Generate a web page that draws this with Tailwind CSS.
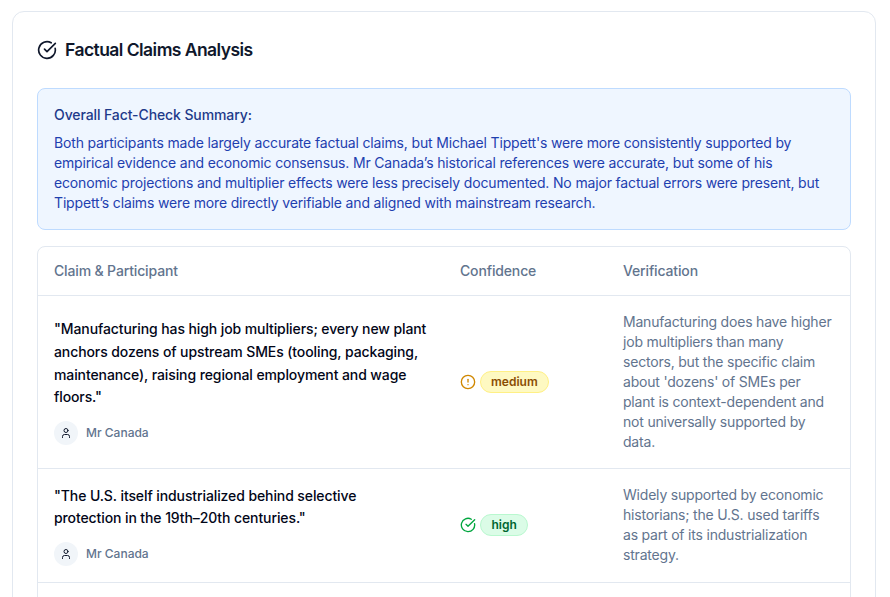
<!DOCTYPE html>
<html lang="en">

<head>
  <meta charset="UTF-8">
  <meta name="viewport" content="width=device-width, initial-scale=1.0">
  <title>Factual Claims Analysis</title>
  <script src="https://cdn.jsdelivr.net/npm/@tailwindcss/browser@4"></script>
</head>

<body class="bg-white h-[597px] overflow-hidden font-['Inter',sans-serif] antialiased">
  <div class="pt-[11px] pl-3 pr-[14px]">
    <div class="bg-white border border-slate-200 rounded-xl p-6">
      <!-- Title -->
      <div class="flex items-center gap-2 mb-6">
        <svg class="w-5 h-5 text-slate-900" viewBox="0 0 24 24" fill="none" stroke="currentColor" stroke-width="2" stroke-linecap="round" stroke-linejoin="round"><path d="M21.801 10A10 10 0 1 1 17 3.335"/><path d="m9 11 3 3L22 4"/></svg>
        <h2 class="text-[17.5px] leading-7 font-semibold tracking-[-0.55px] text-slate-900">Factual Claims Analysis</h2>
      </div>

      <!-- Summary -->
      <div class="bg-blue-50 border border-blue-200 rounded-lg p-4 mb-4">
        <h3 class="text-sm font-medium tracking-[-0.1px] text-[#1e3a8a] mb-2">Overall Fact-Check Summary:</h3>
        <p class="text-sm tracking-[-0.16px] text-[#1e40af]">Both participants made largely accurate factual claims, but Michael Tippett's were more consistently supported by empirical evidence and economic consensus. Mr Canada’s historical references were accurate, but some of his economic projections and multiplier effects were less precisely documented. No major factual errors were present, but Tippett’s claims were more directly verifiable and aligned with mainstream research.</p>
      </div>

      <!-- Claims table -->
      <div class="border border-slate-200 rounded-lg overflow-hidden">
        <table class="w-full table-fixed">
          <thead>
            <tr class="border-b border-slate-200">
              <th class="w-[406px] h-12 px-4 text-left text-sm font-medium tracking-[-0.15px] text-slate-500">Claim &amp; Participant</th>
              <th class="w-[163px] h-12 px-4 text-left text-sm font-medium tracking-[-0.15px] text-slate-500">Confidence</th>
              <th class="h-12 px-4 text-left text-sm font-medium tracking-[-0.15px] text-slate-500">Verification</th>
            </tr>
          </thead>
          <tbody>
            <tr class="border-b border-slate-200">
              <td class="p-4 align-middle">
                <p class="max-w-[372.5px] text-sm leading-relaxed font-[450] tracking-[-0.1px] text-slate-950 mb-3">"Manufacturing has high job multipliers; every new plant anchors dozens of upstream SMEs (tooling, packaging, maintenance), raising regional employment and wage floors."</p>
                <div class="flex items-center gap-2">
                  <div class="w-6 h-6 rounded-full bg-slate-100 flex items-center justify-center">
                    <svg class="w-3 h-3 text-slate-900" viewBox="0 0 24 24" fill="none" stroke="currentColor" stroke-width="2" stroke-linecap="round" stroke-linejoin="round"><path d="M19 21v-2a4 4 0 0 0-4-4H9a4 4 0 0 0-4 4v2"/><circle cx="12" cy="7" r="4"/></svg>
                  </div>
                  <span class="text-xs font-medium text-slate-500">Mr Canada</span>
                </div>
              </td>
              <td class="p-4 align-middle">
                <div class="flex items-center gap-1">
                  <svg class="w-4 h-4 text-yellow-600" viewBox="0 0 24 24" fill="none" stroke="currentColor" stroke-width="2" stroke-linecap="round" stroke-linejoin="round"><circle cx="12" cy="12" r="10"/><line x1="12" x2="12" y1="8" y2="12"/><line x1="12" x2="12.01" y1="16" y2="16"/></svg>
                  <span class="px-2.5 py-0.5 rounded-full border border-yellow-200 bg-yellow-100 text-xs font-semibold text-yellow-800">medium</span>
                </div>
              </td>
              <td class="p-4 align-middle text-sm tracking-[-0.2px] text-slate-500">Manufacturing does have higher job multipliers than many sectors, but the specific claim about 'dozens' of SMEs per plant is context-dependent and not universally supported by data.</td>
            </tr>
            <tr class="border-b border-slate-200">
              <td class="p-4 align-middle">
                <p class="max-w-[372.5px] text-sm leading-relaxed font-[450] tracking-[-0.1px] text-slate-950 mb-3">"The U.S. itself industrialized behind selective protection in the 19th–20th centuries."</p>
                <div class="flex items-center gap-2">
                  <div class="w-6 h-6 rounded-full bg-slate-100 flex items-center justify-center">
                    <svg class="w-3 h-3 text-slate-900" viewBox="0 0 24 24" fill="none" stroke="currentColor" stroke-width="2" stroke-linecap="round" stroke-linejoin="round"><path d="M19 21v-2a4 4 0 0 0-4-4H9a4 4 0 0 0-4 4v2"/><circle cx="12" cy="7" r="4"/></svg>
                  </div>
                  <span class="text-xs font-medium text-slate-500">Mr Canada</span>
                </div>
              </td>
              <td class="p-4 align-middle">
                <div class="flex items-center gap-1">
                  <svg class="w-4 h-4 text-green-600" viewBox="0 0 24 24" fill="none" stroke="currentColor" stroke-width="2" stroke-linecap="round" stroke-linejoin="round"><path d="M21.801 10A10 10 0 1 1 17 3.335"/><path d="m9 11 3 3L22 4"/></svg>
                  <span class="px-[10.5px] py-0.5 rounded-full border border-green-200 bg-green-100 text-xs font-semibold text-green-800">high</span>
                </div>
              </td>
              <td class="p-4 align-middle text-sm tracking-[-0.2px] text-slate-500">Widely supported by economic historians; the U.S. used tariffs as part of its industrialization strategy.</td>
            </tr>
            <tr>
              <td class="h-32" colspan="3"></td>
            </tr>
          </tbody>
        </table>
      </div>
    </div>
  </div>
</body>

</html>
